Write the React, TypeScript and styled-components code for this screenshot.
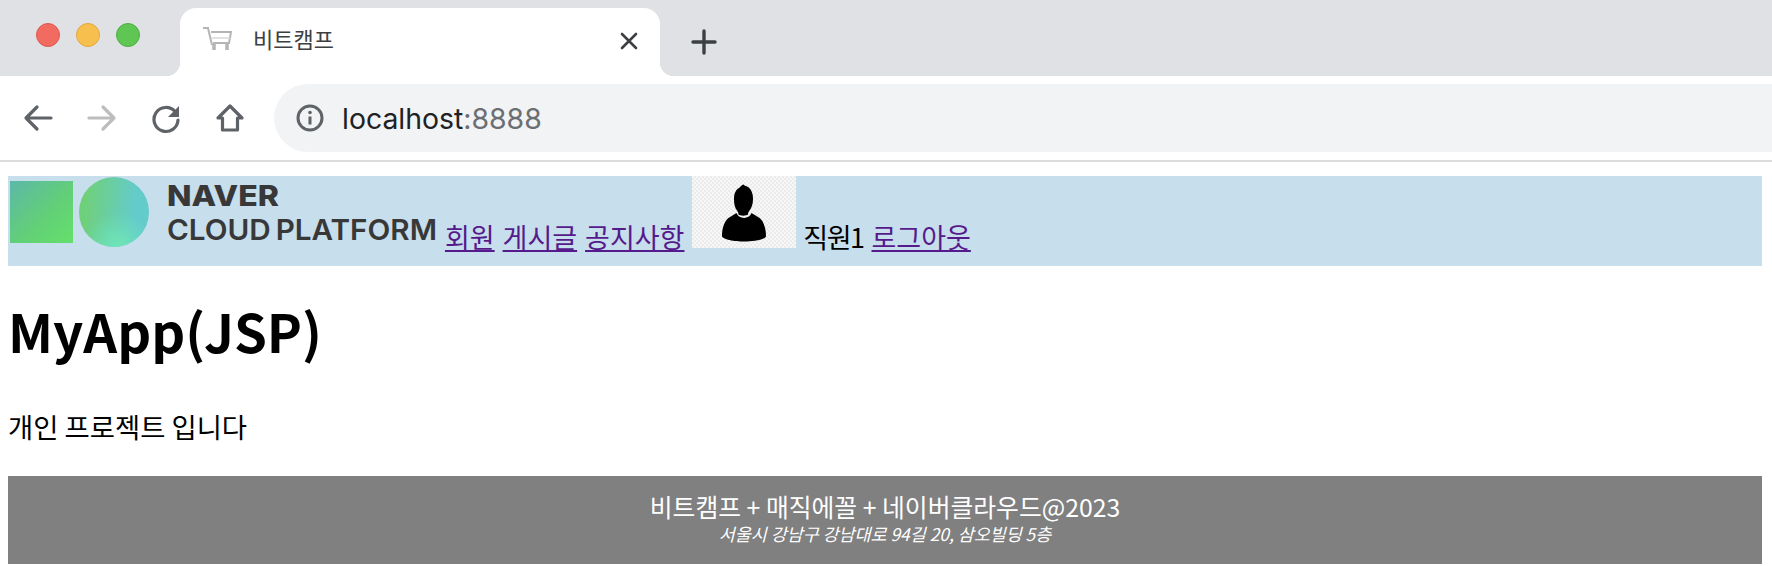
import React from 'react';
import styled, { createGlobalStyle } from 'styled-components';

const GlobalStyle = createGlobalStyle`
  html, body {
    margin: 0;
    padding: 0;
    background: #fff;
    overflow: hidden;
  }
  body {
    font-family: "Noto Sans CJK KR", "Noto Sans", sans-serif;
    color: #000;
  }
`;

const TabStrip = styled.div`
  display: flex;
  align-items: flex-end;
  height: 76px;
  background: #dfe1e5;
`;

const Lights = styled.div`
  display: flex;
  gap: 16px;
  align-self: flex-start;
  margin: 23px 40px 0 36px;
`;

const Light = styled.span<{ $fill: string; $edge: string }>`
  width: 24px;
  height: 24px;
  border-radius: 50%;
  box-sizing: border-box;
  background: ${p => p.$fill};
  border: 1px solid ${p => p.$edge};
`;

const Tab = styled.div`
  position: relative;
  display: flex;
  align-items: center;
  box-sizing: border-box;
  width: 480px;
  height: 68px;
  padding: 0 22px 8px 22px;
  background: #fff;
  border-radius: 16px 16px 0 0;

  &::before,
  &::after {
    content: '';
    position: absolute;
    bottom: 0;
    width: 14px;
    height: 14px;
  }
  &::before {
    left: -14px;
    background: radial-gradient(circle at 0 0, #dfe1e5 14px, #fff 14.5px);
  }
  &::after {
    right: -14px;
    background: radial-gradient(circle at 100% 0, #dfe1e5 14px, #fff 14.5px);
  }
`;

const Favicon = styled.svg`
  width: 30px;
  height: 26px;
  margin-right: 21px;
`;

const TabTitle = styled.span`
  flex: 1;
  font-size: 22px;
  color: #3c4043;
`;

const TabClose = styled.svg`
  width: 18px;
  height: 18px;
  margin-top: 6px;
`;

const NewTab = styled.svg`
  width: 28px;
  height: 28px;
  margin: 8px 0 0 30px;
  align-self: center;
`;

const Toolbar = styled.div`
  display: flex;
  align-items: center;
  height: 84px;
  padding-left: 6px;
  background: #fff;
`;

const NavButton = styled.div`
  display: flex;
  align-items: center;
  justify-content: center;
  width: 64px;
  height: 64px;
`;

const NavIcon = styled.svg<{ $dim?: boolean }>`
  width: 32px;
  height: 32px;
  color: ${p => (p.$dim ? '#bdbdbd' : '#5f6368')};
`;

const Omnibox = styled.div`
  flex: 1;
  display: flex;
  align-items: center;
  height: 68px;
  margin-left: 12px;
  padding-left: 22px;
  background: #f1f3f4;
  border-radius: 34px 0 0 34px;
`;

const InfoIcon = styled.svg`
  width: 28px;
  height: 28px;
  margin-right: 18px;
`;

const Url = styled.span`
  font-family: Inter, "Noto Sans", sans-serif;
  font-size: 28.4px;
  color: #202124;
`;

const Port = styled.span`
  color: #6b6e72;
`;

const ChromeRule = styled.div`
  height: 2px;
  background: #dcdcdc;
`;

const Page = styled.div`
  padding: 14px 10px 0 8px;
`;

const Header = styled.header`
  background: #c7deec;
  font-size: 27px;
  word-spacing: 1.9px;
  padding-bottom: 10px;
`;

const Logo = styled.svg`
  width: 429px;
  height: 72px;
`;

const NavLink = styled.a`
  color: #551a8b;
  text-decoration: underline;
  cursor: pointer;
`;

const StaffName = styled.span`
  letter-spacing: -1.5px;
  margin-left: -1px;
`;

const Avatar = styled.span`
  display: inline-block;
  width: 104px;
  height: 72px;
  background: repeating-conic-gradient(#ebebeb 0 25%, #f7f7f7 0 50%) 0 0 / 4px 4px;
`;

const AvatarFigure = styled.svg`
  display: block;
  width: 104px;
  height: 72px;
`;

const Title = styled.h1`
  margin: 26px 0 0;
  font-size: 52.8px;
  font-weight: 700;
`;

const Intro = styled.p`
  margin: 38px 0 0;
  font-size: 27.4px;
`;

const Footer = styled.footer`
  margin-top: 30px;
  height: 88px;
  padding-top: 13px;
  box-sizing: border-box;
  background: #808080;
  color: #fff;
  text-align: center;
`;

const FooterLine = styled.div`
  font-size: 24.8px;
  line-height: 34px;
`;

const FooterAddress = styled.address`
  font-size: 17.4px;
  line-height: 22px;
`;

const App: React.FC = () => {
  return (
    <>
      <GlobalStyle />
      <TabStrip>
        <Lights>
          <Light $fill="#f26b60" $edge="#dd5a50" />
          <Light $fill="#f7c04e" $edge="#e0a93e" />
          <Light $fill="#5fc653" $edge="#4eae44" />
        </Lights>
        <Tab>
          <Favicon viewBox="0 0 30 26" fill="none" stroke="#b5b5b5">
            <path d="M1 3h5l4 17" strokeWidth="2" />
            <path d="M9 7h20l-2 11H11" strokeWidth="2" />
            <path d="M10 13h18" strokeWidth="1.5" stroke="#d8d8d8" />
            <path d="M12 19v6M25 19v6" strokeWidth="3.5" />
          </Favicon>
          <TabTitle>비트캠프</TabTitle>
          <TabClose viewBox="0 0 18 18" fill="none" stroke="#3c4043" strokeWidth="2.6" strokeLinecap="round">
            <path d="M2 2l14 14M16 2L2 16" />
          </TabClose>
        </Tab>
        <NewTab viewBox="0 0 28 28" fill="none" stroke="#3c4043" strokeWidth="3.4" strokeLinecap="round">
          <path d="M14 3v22M3 14h22" />
        </NewTab>
      </TabStrip>

      <Toolbar>
        <NavButton>
          <NavIcon viewBox="0 0 32 32" fill="none" stroke="currentColor" strokeWidth="3.2" strokeLinecap="round" strokeLinejoin="round">
            <path d="M29 16H4M15 5L4 16l11 11" />
          </NavIcon>
        </NavButton>
        <NavButton>
          <NavIcon $dim viewBox="0 0 32 32" fill="none" stroke="currentColor" strokeWidth="3.2" strokeLinecap="round" strokeLinejoin="round">
            <path d="M3 16h25M17 5l11 11-11 11" />
          </NavIcon>
        </NavButton>
        <NavButton>
          <NavIcon viewBox="0 0 32 32" fill="none">
            <path d="M25 9.500A12 12 0 1 0 28 18" stroke="currentColor" strokeWidth="3.2" strokeLinecap="round" />
            <path d="M29 4v11H18z" fill="currentColor" />
          </NavIcon>
        </NavButton>
        <NavButton>
          <NavIcon viewBox="0 0 32 32" fill="none" stroke="currentColor" strokeWidth="3.2" strokeLinejoin="round">
            <path d="M4 16L16 4l12 12h-4.500v12H8.500V16z" />
          </NavIcon>
        </NavButton>
        <Omnibox>
          <InfoIcon viewBox="0 0 28 28" fill="none">
            <circle cx="14" cy="14" r="12" stroke="#5f6368" strokeWidth="3" />
            <path d="M14 12.500v8" stroke="#5f6368" strokeWidth="3" />
            <circle cx="14" cy="8.500" r="1.800" fill="#5f6368" />
          </InfoIcon>
          <Url>
            localhost<Port>:8888</Port>
          </Url>
        </Omnibox>
      </Toolbar>
      <ChromeRule />

      <Page>
        <Header>
          <Logo viewBox="0 0 429 72">
            <defs>
              <linearGradient id="square" x1="0" y1="0" x2="1" y2="1">
                <stop offset="0" stopColor="#5cb8a8" />
                <stop offset="0.55" stopColor="#62cf78" />
                <stop offset="1" stopColor="#64e06a" />
              </linearGradient>
              <linearGradient id="disc" x1="0" y1="0.4" x2="1" y2="0.5">
                <stop offset="0.1" stopColor="#6fd07c" />
                <stop offset="0.8" stopColor="#64cbcb" />
              </linearGradient>
              <radialGradient id="discGlow" cx="0.55" cy="1" r="0.5">
                <stop offset="0" stopColor="#6ee6b8" />
                <stop offset="1" stopColor="#6ee6b8" stopOpacity="0" />
              </radialGradient>
            </defs>
            <rect x="2" y="5" width="63" height="62" fill="url(#square)" />
            <circle cx="106" cy="36" r="35" fill="url(#disc)" />
            <circle cx="106" cy="36" r="35" fill="url(#discGlow)" />
            <text x="159" y="30" fontFamily="Inter, sans-serif" fontSize="29" fontWeight="800" fill="#383838" textLength="112" lengthAdjust="spacingAndGlyphs">
              NAVER
            </text>
            <text x="159" y="64" fontFamily="Inter, sans-serif" fontSize="29" fontWeight="600" fill="#383838" wordSpacing="-2.5" textLength="270" lengthAdjust="spacingAndGlyphs">
              CLOUD PLATFORM
            </text>
          </Logo>{' '}
          <NavLink>회원</NavLink> <NavLink>게시글</NavLink> <NavLink>공지사항</NavLink>{' '}
          <Avatar>
            <AvatarFigure viewBox="0 0 104 72">
              <path d="M42 23c0-5 1.500-9 5-11 1.500-.8 2.500-3.500 4.500-3.500 1 1 2 1.500 3.500 2 4 2 6 6.500 6 12.500 0 5-1.200 8.500-3.500 11.500-1 1.300-1.500 2.500-1.500 4-1.500 1.500-8 1.500-9.500 0 0-1.500-.5-2.700-1.500-4-2.300-3-3-6.500-3-11.500z" fill="#000" />
              <path d="M30 60c0-8 2.500-16 8-19l6.500-4c2.500 6.500 12.500 6.500 15 0l6.500 4c5.500 3 8 11 8 19 0 3.500-13 5.500-22 5.500S30 63.500 30 60z" fill="#000" />
            </AvatarFigure>
          </Avatar>{' '}
          <StaffName>직원1</StaffName> <NavLink>로그아웃</NavLink>
        </Header>
        <Title>MyApp(JSP)</Title>
        <Intro>개인 프로젝트 입니다</Intro>
        <Footer>
          <FooterLine>비트캠프 + 매직에꼴 + 네이버클라우드@2023</FooterLine>
          <FooterAddress>서울시 강남구 강남대로 94길 20, 삼오빌딩 5층</FooterAddress>
        </Footer>
      </Page>
    </>
  );
};

export default App;
